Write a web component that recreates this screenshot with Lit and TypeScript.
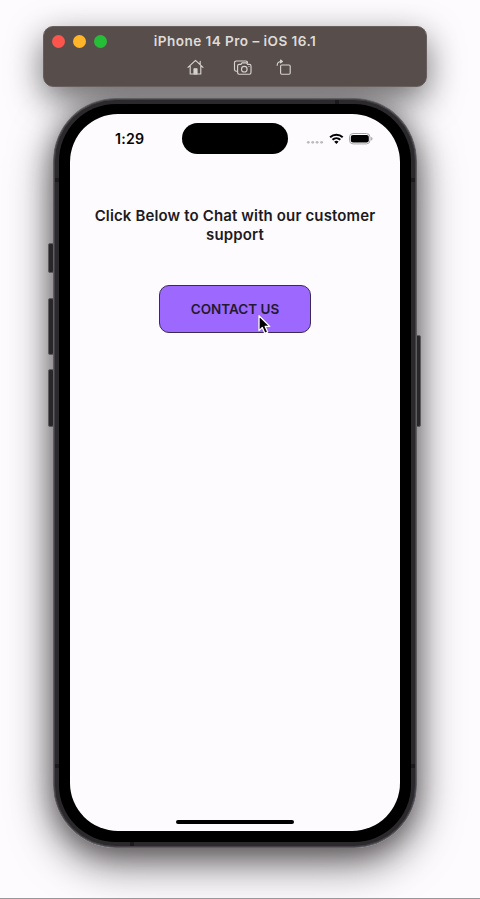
import { LitElement, html, css, svg } from "lit";
import { customElement, property } from "lit/decorators.js";

@customElement("window-bar")
class WindowBar extends LitElement {
  @property() heading = "";

  static styles = css`
    :host {
      display: block;
      position: relative;
      box-sizing: border-box;
      width: 384px;
      height: 61px;
      border-radius: 10px;
      background: #574e4b;
      border: 1px solid #68605f;
    }
    :host::before {
      content: "";
      position: absolute;
      inset: -1px;
      z-index: -1;
      border-radius: 10px;
      box-shadow: 0 12px 34px rgba(20, 17, 19, 0.62);
    }
    .row {
      display: grid;
      grid-template-columns: 76px 1fr 76px;
      align-items: center;
      height: 28px;
    }
    .lights {
      display: flex;
      gap: 8px;
      padding-left: 8px;
    }
    .light {
      width: 13px;
      height: 13px;
      border-radius: 50%;
    }
    .close { background: #ff544b; }
    .minimise { background: #ffb429; }
    .zoom { background: #25bf37; }
    .title {
      text-align: center;
      font: 600 13.6px/16px Inter, sans-serif;
      letter-spacing: 0.44px;
      color: #dfdad8;
      white-space: nowrap;
    }
    .tools {
      display: flex;
      align-items: flex-start;
      padding: 2.5px 0 0 142px;
    }
    svg {
      display: block;
      fill: none;
      stroke: #d6d1cf;
      stroke-width: 1.15;
      stroke-linecap: round;
      stroke-linejoin: round;
    }
    .camera { margin-left: 27px; }
    .rotate { margin-left: 22px; }
  `;

  render() {
    return html`
      <div class="row">
        <div class="lights">
          <span class="light close"></span>
          <span class="light minimise"></span>
          <span class="light zoom"></span>
        </div>
        <div class="title">${this.heading}</div>
      </div>
      <div class="tools">
        <svg width="20" height="20" viewBox="0 0 20 20">
          <path d="M2 9.3 9.5 2.3 17 9.3M4.2 8v8h10.6V8M14.2 6.2V3.4" />
          <path d="M8 15.8v-5h3v5z" fill="#d6d1cf" />
        </svg>
        <svg class="camera" width="20" height="20" viewBox="0 0 20 20">
          <path d="M4 13.2H3.2A1.7 1.7 0 0 1 1.5 11.5V4.7A1.7 1.7 0 0 1 3.2 3H12.8a1.7 1.7 0 0 1 1.7 1.7" />
          <path d="M6.2 6.3H8l1-1.4h4.6l1 1.4h1.8A1.6 1.6 0 0 1 18 7.9v6.7a1.6 1.6 0 0 1-1.6 1.6H6.2a1.6 1.6 0 0 1-1.6-1.6V7.9a1.6 1.6 0 0 1 1.6-1.6z" />
          <circle cx="11.3" cy="11.2" r="2.8" />
          <path d="M15.9 8.5h.1" />
        </svg>
        <svg class="rotate" width="20" height="20" viewBox="0 0 20 20">
          <rect x="5.6" y="7" width="9.6" height="9.2" rx="1.2" />
          <path d="M2.2 7.3C2.2 4.7 3.8 3.5 6.7 3.5" />
          <path d="M5.6 2 7.4 3.5 5.6 4.8z" fill="#d6d1cf" />
        </svg>
      </div>
    `;
  }
}

@customElement("status-bar")
class StatusBar extends LitElement {
  @property() time = "";

  static styles = css`
    :host {
      display: grid;
      grid-template-columns: 112px 106px 1fr;
      align-items: start;
      height: 50px;
      padding-top: 9.4px;
    }
    .time {
      padding: 5.6px 0 0 45px;
      font: 600 14.2px/20px Inter, sans-serif;
      letter-spacing: 0.25px;
      color: #050506;
    }
    .island {
      height: 31px;
      border-radius: 16px;
      background: #000;
    }
    .signals {
      display: flex;
      padding: 7.6px 0 0 18px;
    }
    svg { display: block; }
  `;

  render() {
    return html`
      <div class="time">${this.time}</div>
      <div class="island"></div>
      <div class="signals">
        <svg width="70" height="16" viewBox="0 0 70 16">
          ${[2.3, 6.7, 11.1, 15.6].map(
            (x) => svg`<circle cx=${x} cy="11.3" r="1.4" fill="#bdbbbe" />`
          )}
          <g fill="none" stroke="#000" stroke-width="2">
            <path d="M24.1 6.2a9.2 9.2 0 0 1 12.6 0" />
            <path d="M26.5 8.7a5.7 5.7 0 0 1 7.8 0" />
          </g>
          <path d="M30.4 13.1 28.2 10.8a3.2 3.2 0 0 1 4.4 0z" />
          <rect x="43.5" y="2.5" width="20.5" height="10.4" rx="3.6" fill="#fff" stroke="#a5a4a7" />
          <rect x="44.8" y="3.9" width="18" height="7.6" rx="2.2" />
          <path d="M65.2 6v3.4q1.3-.5 1.3-1.7T65.2 6z" fill="#9b999c" />
        </svg>
      </div>
    `;
  }
}

@customElement("phone-frame")
class PhoneFrame extends LitElement {
  static styles = css`
    :host {
      display: block;
      position: relative;
      box-sizing: border-box;
      width: 364px;
      height: 750px;
      padding: 1px;
      border-radius: 63px;
      background: #5e5d60;
    }
    :host::before {
      content: "";
      position: absolute;
      inset: 0;
      z-index: -1;
      border-radius: 63px;
      box-shadow:
        0 14px 44px rgba(14, 10, 12, 0.62),
        0 4px 26px rgba(14, 12, 13, 0.34);
    }
    .band {
      box-sizing: border-box;
      height: 748px;
      padding: 4px;
      border-radius: 62px;
      background: #2b292c;
      border: 1px solid #444246;
    }
    .bezel {
      box-sizing: border-box;
      height: 738px;
      padding: 10px 11px 11px;
      border-radius: 57px;
      background: #000;
    }
    .screen {
      display: flex;
      flex-direction: column;
      height: 717px;
      border-radius: 48px;
      background: #fdfbfe;
      overflow: hidden;
    }
    .key {
      position: absolute;
      z-index: -1;
      box-sizing: border-box;
      width: 6px;
      left: -5px;
      background: #29272a;
      border: 1px solid #5d5b5e;
      border-radius: 2px;
    }
    .mute { top: 145px; height: 30px; }
    .up { top: 200px; height: 57px; }
    .down { top: 271px; height: 58px; }
    .power { top: 237px; height: 92px; left: auto; right: -4px; }
    .seam {
      position: absolute;
      width: 4px;
      height: 4px;
      background: #1b191c;
    }
    .left { left: 2px; }
    .right { right: 2px; }
    .high { top: 80px; }
    .low { top: 666px; }
    .top { top: 2px; left: 282px; }
    .bottom { bottom: 2px; left: 77px; }
  `;

  render() {
    return html`
      <span class="key mute"></span>
      <span class="key up"></span>
      <span class="key down"></span>
      <span class="key power"></span>
      <div class="band">
        <div class="bezel"><div class="screen"><slot></slot></div></div>
      </div>
      <span class="seam left high"></span>
      <span class="seam right high"></span>
      <span class="seam left low"></span>
      <span class="seam right low"></span>
      <span class="seam top"></span>
      <span class="seam bottom"></span>
    `;
  }
}

@customElement("app-root")
class AppRoot extends LitElement {
  static styles = css`
    :host {
      display: flex;
      flex-direction: column;
      box-sizing: border-box;
      position: relative;
      z-index: 0;
      isolation: isolate;
      width: 480px;
      height: 899px;
      padding-top: 26px;
      background: #fdfbfe;
      border-bottom: 1px solid #99979a;
      overflow: hidden;
    }
    window-bar { margin-left: 43px; }
    phone-frame { margin: 11px 0 0 53px; }
    .content {
      flex: 1;
      display: flex;
      flex-direction: column;
      align-items: center;
      padding-top: 32.6px;
    }
    h1 {
      margin: 0;
      text-align: center;
      font: 600 15px/19px Inter, sans-serif;
      letter-spacing: 0.14px;
      color: #1c1a1e;
      white-space: nowrap;
    }
    .contact {
      position: relative;
      display: flex;
      align-items: center;
      justify-content: center;
      box-sizing: border-box;
      width: 152px;
      height: 48px;
      margin: 41px 0 0 0;
      padding: 0;
      border: 1px solid #3b2a55;
      border-radius: 10px;
      background: #9d68fd;
      font: 600 13.5px/18px Inter, sans-serif;
      color: #231a32;
    }
    .cursor {
      position: absolute;
      left: 97px;
      top: 28px;
    }
    .home {
      align-self: center;
      width: 118px;
      height: 4px;
      margin-bottom: 7px;
      border-radius: 3px;
      background: #000;
    }
  `;

  render() {
    return html`
      <window-bar heading="iPhone 14 Pro – iOS 16.1"></window-bar>
      <phone-frame>
        <status-bar time="1:29"></status-bar>
        <div class="content">
          <h1>Click Below to Chat with our customer<br />support</h1>
          <button class="contact">
            CONTACT US
            <svg class="cursor" width="15" height="22" viewBox="0 0 15 22">
              <path
                d="M2 1.8V16.6L5.3 13.5 7.8 19.3 10.7 18.1 8.2 12.4H12.7Z"
                fill="#000"
                stroke="#fff"
                stroke-width="1.3"
                stroke-linejoin="round"
              />
            </svg>
          </button>
        </div>
        <div class="home"></div>
      </phone-frame>
    `;
  }
}
